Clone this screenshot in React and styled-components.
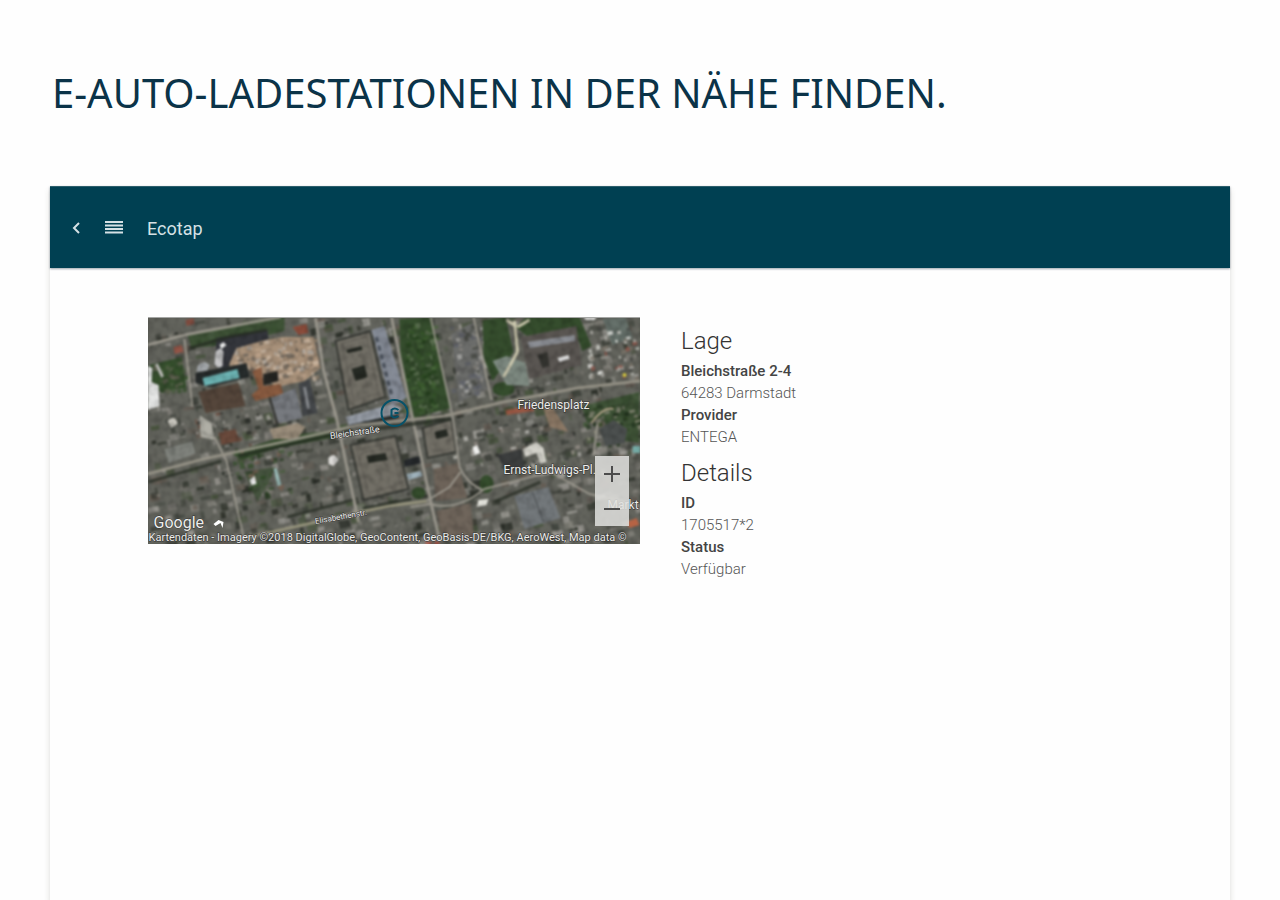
import React from "react";
import styled, { createGlobalStyle } from "styled-components";

const GlobalStyle = createGlobalStyle`
  * { box-sizing: border-box; }
  body { margin: 0; background: #fefefe; font-family: Roboto, "Liberation Sans", sans-serif; }
`;

const Page = styled.div`
  min-height: 100vh;
  display: flex;
  flex-direction: column;
  padding: 0 50px;
`;
const Headline = styled.h1`
  margin: 0;
  padding: 63px 0 63px 2px;
  font: 400 40px/60px "Noto Sans", sans-serif;
  color: #0b3348;
`;
const Panel = styled.main`
  flex: 1;
  background: #fefefe;
  box-shadow: 0 4px 6px rgba(60, 60, 40, 0.18);
`;
const TopBar = styled.header`
  height: 82px;
  display: flex;
  align-items: center;
  padding: 0 18px;
  background: #004052;
  border-top: 1px solid #2d5f6c;
  box-shadow: 0 1px 2px rgba(0, 30, 50, 0.4);
  color: #d5e1e5;
`;
const IconButton = styled.button`
  display: flex;
  padding: 0;
  margin-right: ${(p) => p.$gap}px;
  border: 0;
  background: none;
  color: inherit;
`;
const Title = styled.h2`
  margin: 0;
  padding-top: 3px;
  font-size: 18px;
  line-height: 24px;
  font-weight: 400;
`;
const Content = styled.div`
  display: grid;
  grid-template-columns: 1fr 1fr;
  padding: 49px 98px;
`;
const MapFrame = styled.section`
  position: relative;
  height: 227px;
  overflow: hidden;
  background: #555850;
`;
const MapArt = styled.svg`
  display: block;
  width: 100%;
  height: 100%;
`;
const Zoom = styled.div`
  position: absolute;
  right: 11px;
  bottom: 18px;
  display: flex;
  flex-direction: column;
  width: 34px;
  background: rgba(225, 225, 222, 0.85);
`;
const ZoomButton = styled.button`
  display: flex;
  align-items: center;
  justify-content: center;
  height: 35px;
  padding: 0;
  border: 0;
  background: none;
  color: #4c4c4c;
`;
const Info = styled.section`
  padding: 8px 0 0 41px;
  color: #555;
`;
const InfoTitle = styled.h3`
  margin: 0;
  font-size: 24px;
  line-height: 32px;
  font-weight: 300;
  color: #333;
`;
const List = styled.dl`
  margin: 3px 0 9px;
  font-size: 15px;
  line-height: 22px;
`;
const Term = styled.dt`
  font-weight: 500;
  color: #444;
`;
const Value = styled.dd`
  margin: 0;
  font-weight: 300;
`;

/* Fixed-seed generator, so that the small roofs and cars stay in place. */
const seeded = (seed) => () => {
  seed = (seed * 16807) % 2147483647;
  return seed / 2147483647;
};
const rnd = seeded(4711);
const tones = ["#85837c", "#74736c", "#2e322a", "#93918b", "#42463f", "#282c25", "#a5a39d", "#665c53", "#46543b", "#6b6a63"];
const roofs = Array.from({ length: 1300 }, () => ({
  x: rnd() * 493, y: rnd() * 227, w: 2 + rnd() * 9, h: 2 + rnd() * 6,
  c: tones[Math.floor(rnd() * tones.length)], o: 0.4 + rnd() * 0.5,
}));
const scatter = (n, x, y, w, h, colors) =>
  Array.from({ length: n }, () => ({
    x: x + rnd() * w, y: y + rnd() * h, w: 2 + rnd() * 4, h: 2 + rnd() * 3,
    c: colors[Math.floor(rnd() * colors.length)], o: 0.75,
  }));
const site = scatter(150, 84, 20, 85, 40, ["#c3a88f", "#9a8570", "#d0bda9", "#b8b1a9", "#7b7062", "#6a6258"]);
const cars = scatter(55, 438, 10, 50, 50, ["#f0f0ec", "#b3b1ac", "#96554a", "#4b4c48", "#cccdc7", "#7b746a"]);
const leaves = [
  ...scatter(120, 256, 5, 32, 95, ["#35552a", "#476639", "#24401c", "#5f7154"]),
  ...scatter(60, 435, 85, 57, 42, ["#2d4622", "#3f5735", "#22331d", "#8b8979"]),
  ...scatter(50, 5, 45, 32, 30, ["#34502b", "#4a5d3f", "#666656"]),
  ...scatter(40, 84, 128, 60, 50, ["#34502b", "#4a5d3f", "#273c20", "#7a6153"]),
];
const walls = [
  ...scatter(40, 30, 95, 120, 35, ["#6a4a3c", "#a9a8a2", "#8d8b85", "#2d302c"]),
  ...scatter(30, 300, 105, 130, 45, ["#2d302c", "#c1c0bb", "#97908a", "#3a3e3a"]),
];
const courtyard = scatter(60, 302, 8, 32, 70, ["#8d8b86", "#474943", "#b0b0ad", "#5f6269"]);
const Blocks = ({ items }) =>
  items.map((b, i) => (
    <rect key={i} x={b.x} y={b.y} width={b.w} height={b.h} fill={b.c} opacity={b.o} transform={`rotate(-11 ${b.x} ${b.y})`} />
  ));

const Satellite = () => (
  <MapArt viewBox="0 0 493 227" preserveAspectRatio="xMidYMid slice" role="img" aria-label="Satellitenkarte">
    <defs>
      <filter id="soft" x="0" y="0" width="100%" height="100%" colorInterpolationFilters="sRGB"><feGaussianBlur stdDeviation="0.8" /></filter>
      <filter id="grain" x="0" y="0" width="100%" height="100%">
        <feTurbulence type="fractalNoise" baseFrequency="0.14" numOctaves="3" seed="8" />
        <feColorMatrix values="0 0 0 0 0  0 0 0 0 0  0 0 0 0 0  0 2.4 0 0 -1" />
      </filter>
    </defs>
    <g filter="url(#soft)">
      <rect width="493" height="227" fill="#63645d" />
      <Blocks items={roofs} />
      <Blocks items={walls} />
      {/* parks and trees */}
      <g fill="#354d2d">
        <path d="M40 18L112 2L137 0V14L80 28L44 31Z" opacity="0.8" />
        <path d="M2 48L34 40L39 70L14 76L2 62Z" />
        <path d="M252 2L284 0L303 91L266 101L253 40Z" />
        <path d="M335 3L358 0L366 35L345 64L336 40Z" />
        <path d="M379 0L432 0L444 29L435 34L426 10L382 21L368 10Z" />
        <path d="M434 89L492 75V126L462 122L456 99L440 107Z" opacity="0.8" />
        <path d="M84 136L138 119L188 113V120L127 132L94 143Z" />
        <path d="M97 155L128 150L121 165L110 185L106 176Z" opacity="0.6" />
        <ellipse cx="356" cy="72" rx="11" ry="7" />
        <ellipse cx="339" cy="167" rx="7" ry="9" />
        <ellipse cx="271" cy="176" rx="7" ry="6" />
      </g>
      <Blocks items={leaves} />
      {/* excavation */}
      <path d="M82 35L107 25L135 20L166 20L173 51L157 64L129 70L110 56L91 49L82 50Z" fill="#a8917a" />
      <Blocks items={site} />
      <path d="M69 21L120 13L121 22L89 31L79 53L67 49Z" fill="#34363c" />
      <path d="M68 35q5-7 8 0l-1 14q-5 4-8-2Z" fill="#c5c5c6" />
      <path d="M72 28l4-3 3 3-5 4Z" fill="#eceded" />
      <path d="M50 49q7-7 12-1l-2 6-11 1Z" fill="#a3a7aa" />
      <path d="M48 56L99 46L102 60L62 70L48 66Z" fill="#272c2c" />
      <path d="M55 61L90 52L92 61L57 69Z" fill="#6cb3b3" />
      <path d="M51 75L91 66L98 89L58 96Z" fill="#55463b" />
      <path d="M105 54L114 50L116 69L133 67L136 77L108 84L104 78L111 72Z" fill="#895b40" />
      <path d="M116 57L130 54L131 64L116 68Z" fill="#252522" />
      <path d="M124 81L148 71L155 101L129 107L122 87Z" fill="#777a7f" />
      <path d="M122 80L130 107" stroke="#34352f" strokeWidth="2" />
      <path d="M151 67L162 62L170 96L155 99Z" fill="#44474a" />
      <path d="M157 70l4 22" stroke="#85888c" strokeWidth="3" />
      <path d="M122 112L150 106L158 110L150 122L126 122Z" fill="#9b8e7c" />
      <path d="M34 28l-8 2 1 7 9-2Z" fill="#925547" />
      <path d="M38 3l8-2 1 6-8 2Z" fill="#824e41" />
      <path d="M145 10L159 7L161 16L151 18Z" fill="#8c4d3c" />
      <path d="M0 49L5 51L4 65L11 68L12 89L0 93Z" fill="#e5e6e5" />
      <path d="M9 47l6 13" stroke="#c4c4c0" strokeWidth="3" />
      {/* large courtyard buildings */}
      <g fill="#726f66" stroke="#3a3c37" strokeWidth="2">
        <path d="M188 24L223 14L238 80L201 93Z" />
        <path d="M203 128L248 119L261 172L216 183Z" />
        <path d="M275 111L304 102L309 135L280 141Z" />
      </g>
      <g fill="none" stroke="#625f58" strokeWidth="1">
        <path d="M195 26L219 20L231 76L206 84Z" />
        <path d="M210 133L243 126L253 167L221 176Z" />
      </g>
      <path d="M304 17L326 5L340 72L311 85Z" fill="#6c6d6b" />
      <Blocks items={courtyard} />
      <g fill="#252923">
        <path d="M199 33l15-4 1 4-15 3Z" /><path d="M204 52l13-4 3 12-12 4Z" />
        <path d="M219 139l19-3 2 7-19 3Z" /><path d="M287 115l12-3 2 7-12 3Z" />
      </g>
      <path d="M224 13L237 9L259 81L244 89Z" fill="#858b96" />
      <path d="M229 20l16 61" stroke="#4c535d" strokeWidth="3" strokeDasharray="5 4" />
      <path d="M198 100L244 87L255 91L248 98L202 109Z" fill="#959ba4" />
      <path d="M202 110L251 99" stroke="#272b2a" strokeWidth="4" />
      {/* museum and its forecourt */}
      <path d="M373 20L429 9L434 48L382 62Z" fill="#5a5652" />
      <path d="M380 25L427 18L428 24L382 31Z" fill="#8b8e94" />
      <path d="M390 38l10-3 2 14-7 2Z" fill="#33332f" />
      <path d="M410 41l11-3 1 4-10 3Z" fill="#ddd" />
      <path d="M345 44L359 39L378 46L382 69L359 68Z" fill="#7d8980" />
      <path d="M370 35L367 4M370 10l12-7M369 10l-10-7M370 35L356 60" fill="none" stroke="#cdc9af" strokeWidth="3" />
      <path d="M455 2L478 0L485 21L465 28Z" fill="#66716b" />
      <Blocks items={cars} />
      <circle cx="477" cy="58" r="2" fill="#d4c63d" />
      <path d="M436 0h13l-2 3h-9Z" fill="#f0f0ee" />
      {/* southern blocks */}
      <path d="M367 179L401 170L413 201L377 212Z" fill="#73787b" />
      <path d="M385 175l11 30" stroke="#44484a" />
      <path d="M396 92L404 89L421 115L402 110Z" fill="#8b7865" />
      <path d="M358 93l26-4 3 5-28 4Z" fill="#9a5844" />
      <path d="M350 138l24-6 3 20-18 5Z" fill="#3c3e3e" />
      <path d="M375 132l14-7 7 6 3 14-6 2-4-11-11 4Z" fill="#d2d1c9" />
      <path d="M452 112l14-9 14 9-3 14-19 3Z" fill="#4c504f" />
      <path d="M485 129h8v7h-8Z" fill="#75aaa5" />
      <path d="M325 130l5-2 3 8-6 2Z" fill="#f1f1ef" />
      <path d="M331 183l10-1-2 6-10 2Z" fill="#e4e4dd" />
      <path d="M256 143l17-4 1 7-17 4Z" fill="#25282b" />
      <path d="M259 157l14-3 2 5-14 4Z" fill="#9eb1bb" />
      <path d="M289 194L323 186L327 222L294 222Z" fill="#6f655b" />
      <path d="M286 152L310 146L320 181L288 184Z" fill="#6d6359" />
      <path d="M444 106q12-17 22-14" stroke="#b2a48a" strokeWidth="2" fill="none" />
      <path d="M102 163l5-4 2 8-5 1Z" fill="#eee" />
      <path d="M126 152l3-1 5 17-4 1Z" fill="#97b8b4" />
      <path d="M181 141q5-7 10 2l-5 6-5-2Z" fill="#e1dfdc" />
      <path d="M17 132l28-8 3 13-27 9Z" fill="#7f827c" />
      <path d="M52 98l12 8 3 17-14-3Z" fill="#b0afa6" />
      <path d="M20 104q8-7 10 3l-6 4Z" fill="#cbc9c0" />
      <path d="M71 116l17-4 4 12-18 4Z" fill="#6a4a3c" />
      <rect width="493" height="227" filter="url(#grain)" opacity="0.2" />
      {/* streets */}
      <g fill="none" stroke="#a19d93" strokeWidth="3" opacity="0.85">
        <path d="M0 28L37 18L80 10L133 0" />
        <path d="M37 22L45 90M67 120L79 144L96 220" strokeWidth="2" />
        <path d="M168 1L176 53L189 101L211 205" />
        <path d="M244 0L264 96L284 188L292 223" />
        <path d="M283 0L305 99L312 150Q319 166 335 173" strokeWidth="2" />
        <path d="M0 157L56 142L140 124L212 108L297 99L356 85L430 71L493 64" stroke="#9b978b" />
        <path d="M94 222L173 204L240 189L279 184" stroke="#9d9a81" />
        <path d="M279 184L302 170L313 155M263 190L283 187Q308 195 337 172L387 159L405 156L442 177L493 188" strokeWidth="2" />
        <path d="M326 0L344 83" strokeWidth="2" />
        <path d="M450 107L446 138" strokeWidth="2" />
      </g>
      <g fill="none" stroke="#252b22" strokeWidth="3" opacity="0.7">
        <path d="M43 31L81 20L119 13" />
        <path d="M1 165L74 144M91 139L205 113" />
        <path d="M218 113L303 102" strokeWidth="4" />
        <path d="M140 200L205 183M216 191L264 182" />
        <path d="M347 185L393 165" />
      </g>
      <path d="M479 205l10-4 3 7-10 3Z" fill="#b66344" />
      <path d="M278 226h6M287 226h5M72 220h4" stroke="#b64538" strokeWidth="2" />
    </g>
    <g fill="#ededea" stroke="#333" strokeWidth="1" paintOrder="stroke" fontFamily="Roboto, sans-serif" fontSize="12">
      <text x="370" y="92">Friedensplatz</text>
      <text x="356" y="157">Ernst-Ludwigs-Pl.</text>
      <text x="183" y="122" fontSize="9" transform="rotate(-8 183 122)">Bleichstraße</text>
      <text x="168" y="207" fontSize="8" transform="rotate(-10 168 207)">Elisabethenstr.</text>
      <text x="460" y="192">Markt</text>
      <text x="6" y="211" fontSize="16">Google</text>
      <text x="1" y="224" fontSize="11">Kartendaten - Imagery ©2018 DigitalGlobe, GeoContent, GeoBasis-DE/BKG, AeroWest, Map data ©</text>
    </g>
    <path d="M66 207l5-4 5 2-1 6-2-5-5 3Z" fill="#fff" />
    <g fill="none" stroke="#075269" strokeWidth="2">
      <circle cx="247" cy="96" r="13" />
      <path d="M251 93q-4-3-7 0v6q3 3 7 0M247 96h4" />
    </g>
    <path d="M0 .5H493" stroke="#a5a6a4" />
  </MapArt>
);

export default function App() {
  return (
    <>
      <GlobalStyle />
      <Page>
        <Headline>E-AUTO-LADESTATIONEN IN DER NÄHE FINDEN.</Headline>
        <Panel>
          <TopBar>
            <IconButton $gap={21} aria-label="Zurück">
              <svg width="16" height="16" viewBox="0 0 16 16" fill="none" stroke="currentColor" strokeWidth="2">
                <path d="M11 3L6 8L11 13" />
              </svg>
            </IconButton>
            <IconButton $gap={24} aria-label="Menü">
              <svg width="18" height="16" viewBox="0 0 18 16" fill="none" stroke="currentColor" strokeWidth="2">
                <path d="M0 2H18M0 5.5H18M0 9H18M0 12.5H18" />
              </svg>
            </IconButton>
            <Title>Ecotap</Title>
          </TopBar>
          <Content>
            <MapFrame aria-label="Karte">
              <Satellite />
              <Zoom>
                <ZoomButton aria-label="Vergrößern">
                  <svg width="16" height="16" stroke="currentColor" strokeWidth="2"><path d="M0 8H16M8 0V16" /></svg>
                </ZoomButton>
                <ZoomButton aria-label="Verkleinern">
                  <svg width="16" height="16" stroke="currentColor" strokeWidth="2"><path d="M0 8H16" /></svg>
                </ZoomButton>
              </Zoom>
            </MapFrame>
            <Info>
              <InfoTitle>Lage</InfoTitle>
              <List>
                <Term>Bleichstraße 2-4</Term>
                <Value>64283 Darmstadt</Value>
                <Term>Provider</Term>
                <Value>ENTEGA</Value>
              </List>
              <InfoTitle>Details</InfoTitle>
              <List>
                <Term>ID</Term>
                <Value>1705517*2</Value>
                <Term>Status</Term>
                <Value>Verfügbar</Value>
              </List>
            </Info>
          </Content>
        </Panel>
      </Page>
    </>
  );
}
